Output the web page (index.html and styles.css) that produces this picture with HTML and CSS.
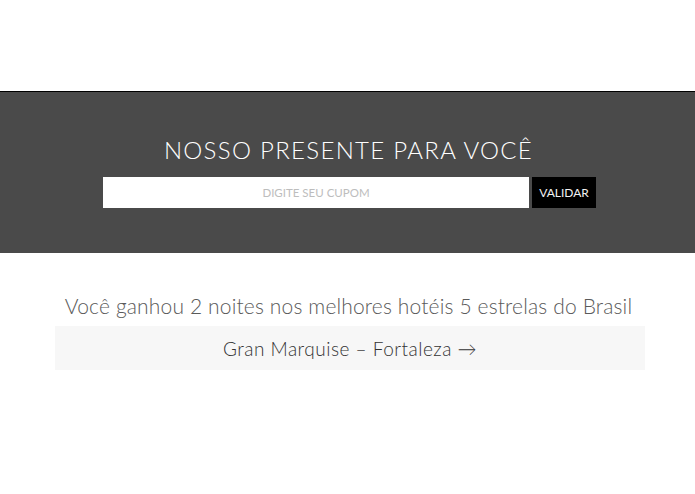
FILE: index.html
```html
<!DOCTYPE html>
<html lang="pt-BR">
<head>
<meta charset="utf-8">
<title>Nosso presente para você</title>
<link rel="stylesheet" href="styles.css">
</head>
<body>
<div class="top-space"></div>
<section class="gift">
  <h1 class="gift-title">NOSSO PRESENTE PARA VOCÊ</h1>
  <form class="coupon-form">
    <input class="coupon-input" type="text" placeholder="DIGITE SEU CUPOM">
    <button class="coupon-btn" type="button">VALIDAR</button>
  </form>
</section>
<section class="prize">
  <p class="prize-text">Você ganhou 2 noites nos melhores hotéis 5 estrelas do Brasil</p>
  <div class="hotel-box">Gran Marquise – Fortaleza →</div>
</section>
</body>
</html>
```
FILE: styles.css
```css
html, body {
  margin: 0;
  padding: 0;
  background: #ffffff;
  font-family: "Lato", "Open Sans", sans-serif;
  font-weight: 300;
}
.top-space {
  height: 91px;
}
.gift {
  background: #4a4a4a;
  border-top: 1px solid #000;
  height: 162px;
  box-sizing: border-box;
  padding-top: 42px;
  display: flex;
  flex-direction: column;
  align-items: center;
}
.gift-title {
  margin: 0 0 0 2px;
  color: #ffffff;
  font-weight: 300;
  font-size: 24px;
  line-height: 32px;
  letter-spacing: 1.3px;
}
.coupon-form {
  margin-top: 11px;
  display: flex;
  gap: 3px;
  margin-left: 4px;
}
.coupon-input {
  width: 426px;
  height: 31px;
  box-sizing: border-box;
  border: none;
  background: #fff;
  text-align: center;
  font-family: inherit;
  font-size: 11.5px;
  color: #333;
  outline: none;
  padding: 0;
}
.coupon-input::placeholder {
  color: #bdbdbd;
}
.coupon-btn {
  width: 64px;
  height: 31px;
  border: none;
  background: #000;
  color: #f2f2f2;
  font-family: inherit;
  font-weight: 400;
  font-size: 12px;
  padding: 0;
}
.prize {
  display: flex;
  flex-direction: column;
  align-items: center;
  padding-top: 39px;
}
.prize-text {
  margin: 0 0 0 2px;
  color: #5a5a5a;
  font-size: 21px;
  line-height: 28px;
  letter-spacing: 0.15px;
}
.hotel-box {
  margin-top: 6px;
  width: 590px;
  height: 44px;
  margin-left: 5px;
  background: #f7f7f7;
  color: #333;
  font-size: 19px;
  letter-spacing: 0.5px;
  display: flex;
  align-items: center;
  justify-content: center;
}
```
